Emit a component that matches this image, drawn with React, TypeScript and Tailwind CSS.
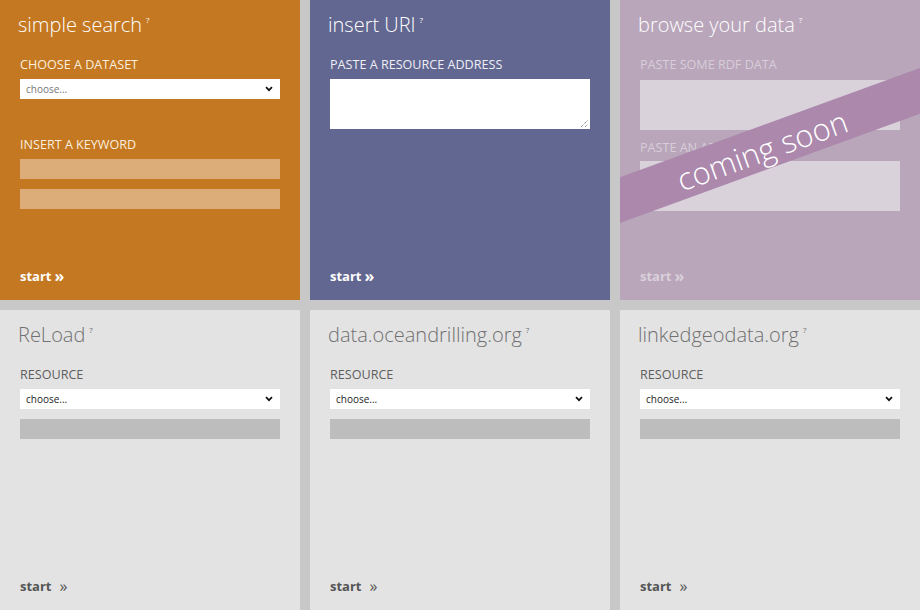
import React from "react";

const font = { fontFamily: '"Open Sans", "Noto Sans", sans-serif' };

function Chevron({ color = "#111" }: { color?: string }) {
  return (
    <svg width="8" height="6" viewBox="0 0 8 6" className="absolute right-[7px] top-[7px]">
      <polyline points="1,1.2 4,4.2 7,1.2" fill="none" stroke={color} strokeWidth="1.7" />
    </svg>
  );
}

function Select({ textColor }: { textColor: string }) {
  return (
    <div className="relative h-[20px] w-[260px] bg-white">
      <span className={`absolute left-[6px] top-[2px] text-[10px] leading-[16px] ${textColor}`}>choose...</span>
      <Chevron />
    </div>
  );
}

function Title({ text, color }: { text: string; color: string }) {
  return (
    <div className={`-ml-[2px] text-[20px] font-light leading-[28px] ${color}`}>
      {text}
      <span className="relative -top-[9px] ml-[4px] text-[8px] font-normal">?</span>
    </div>
  );
}

function Label({ text, color, className = "" }: { text: string; color: string; className?: string }) {
  return <div className={`text-[12.6px] leading-[16px] ${color} ${className}`}>{text}</div>;
}

function Start({ color, wide }: { color: string; wide?: boolean }) {
  return (
    <div className={`mt-auto mb-[16px] flex items-center text-[13px] font-bold leading-[16px] ${color}`}>
      <span>start</span>
      <span className={`${wide ? "ml-[8px] font-normal" : "ml-[3px]"} text-[16px] leading-[16px]`}>»</span>
    </div>
  );
}

function DataTile({ title }: { title: string }) {
  return (
    <div className="flex flex-col bg-[#e3e3e3] px-5 pt-[11px]">
      <Title text={title} color="text-[#707070]" />
      <Label text="RESOURCE" color="text-[#5e5e5e]" className="mt-[14px]" />
      <div className="mt-[6px]">
        <Select textColor="text-[#222]" />
      </div>
      <div className="mt-[10px] h-[20px] w-[260px] bg-[#bdbdbd]" />
      <Start color="text-[#555]" wide />
    </div>
  );
}

export default function App() {
  return (
    <div
      style={font}
      className="grid h-[610px] w-[920px] grid-cols-[300px_300px_300px] grid-rows-[300px_300px] gap-[10px] bg-[#c8c8c8]"
    >
      {/* simple search */}
      <div className="flex flex-col bg-[#c47822] px-5 pt-[11px]">
        <Title text="simple search" color="text-white" />
        <Label text="CHOOSE A DATASET" color="text-[#fbeedd]" className="mt-[14px]" />
        <div className="mt-[6px]">
          <Select textColor="text-[#777]" />
        </div>
        <Label text="INSERT A KEYWORD" color="text-[#fbeedd]" className="mt-[38px]" />
        <div className="mt-[6px] h-[20px] w-[260px] bg-[#dcad79]" />
        <div className="mt-[10px] h-[20px] w-[260px] bg-[#dcad79]" />
        <Start color="text-white" />
      </div>

      {/* insert URI */}
      <div className="flex flex-col bg-[#626791] px-5 pt-[11px]">
        <Title text="insert URI" color="text-white" />
        <Label text="PASTE A RESOURCE ADDRESS" color="text-[#eeeef5]" className="mt-[14px]" />
        <div className="relative mt-[6px] h-[50px] w-[260px] bg-white">
          <svg width="9" height="9" viewBox="0 0 9 9" className="absolute bottom-[1px] right-[1px]">
            <line x1="1" y1="8" x2="8" y2="1" stroke="#666" strokeWidth="1" strokeDasharray="1 1" />
            <line x1="5" y1="8" x2="8" y2="5" stroke="#666" strokeWidth="1" strokeDasharray="1 1" />
          </svg>
        </div>
        <Start color="text-white" />
      </div>

      {/* browse your data */}
      <div className="relative flex flex-col overflow-hidden bg-[#b9a6bb] px-5 pt-[11px]">
        <Title text="browse your data" color="text-white" />
        <Label text="PASTE SOME RDF DATA" color="text-[#d8cdd9]" className="mt-[14px]" />
        <div className="mt-[7px] h-[50px] w-[260px] bg-[#d9d2db]" />
        <Label text="PASTE AN ADDRESS" color="text-[#d8cdd9]" className="mt-[10px]" />
        <div className="mt-[5px] h-[50px] w-[260px] bg-[#d9d2db]" />
        <Start color="text-[#d9d0da]" />
        <div className="absolute left-[-100px] top-[124px] flex h-[43px] w-[500px] -rotate-[20deg] items-center justify-center bg-[#ab88ac] pr-[18px] pt-[4px]">
          <span className="text-[31px] font-light leading-none text-white">coming soon</span>
        </div>
      </div>

      <DataTile title="ReLoad" />
      <DataTile title="data.oceandrilling.org" />
      <DataTile title="linkedgeodata.org" />
    </div>
  );
}
